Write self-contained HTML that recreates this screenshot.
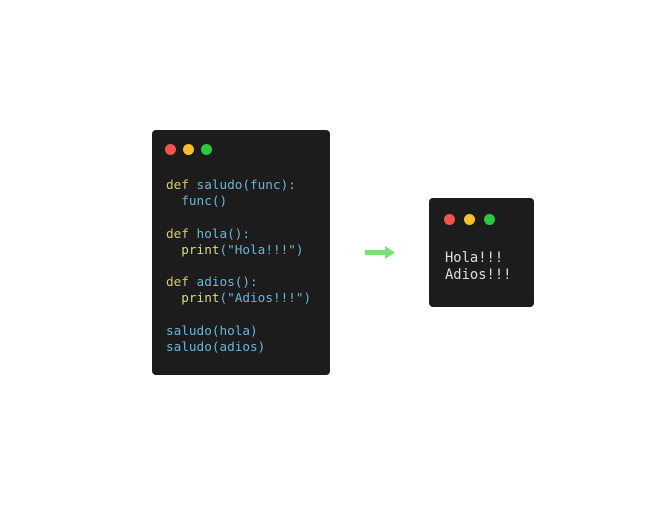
<!DOCTYPE html>
<html><head><style>
body{margin:0;width:672px;height:505px;background:#fff;position:relative;overflow:hidden;font-family:"DejaVu Sans Mono","Liberation Mono",monospace}
.box{position:absolute;background:#1c1c1c;border-radius:4px}
.dot{position:absolute;width:11px;height:11px;border-radius:50%}
.r{background:#f2534c}.y{background:#f7bf2c}.g{background:#2dc840}
pre{margin:0;position:absolute;font-family:inherit}
.k{color:#d2c775}.n{color:#6cb4d6}.p{color:#d6d98a}.w{color:#cfd6dc}
</style></head><body>
<div class="box" style="left:152px;top:130px;width:178px;height:245px">
<div class="dot r" style="left:13px;top:14px"></div>
<div class="dot y" style="left:31px;top:14px"></div>
<div class="dot g" style="left:49px;top:14px"></div>
<pre style="left:14px;top:47px;font-size:12.7px;line-height:16.2px;color:#6cb4d6"><span class="k">def</span> saludo(func):
  func()

<span class="k">def</span> hola():
  <span class="p">print</span>("Hola!!!")

<span class="k">def</span> adios():
  <span class="p">print</span>("Adios!!!")

saludo(hola)
saludo(adios)</pre>
</div>
<svg style="position:absolute;left:364px;top:245px" width="32" height="15"><path d="M1 5h20V1l10 6.5-10 6.5v-4H1z" fill="#7ce07a"/></svg>
<div class="box" style="left:429px;top:198px;width:105px;height:109px">
<div class="dot r" style="left:15px;top:16px"></div>
<div class="dot y" style="left:35px;top:16px"></div>
<div class="dot g" style="left:55px;top:16px"></div>
<pre style="left:16px;top:52px;font-size:13.8px;line-height:17px;color:#dcdcdc">Hola!!!
Adios!!!</pre>
</div>
</body></html>
